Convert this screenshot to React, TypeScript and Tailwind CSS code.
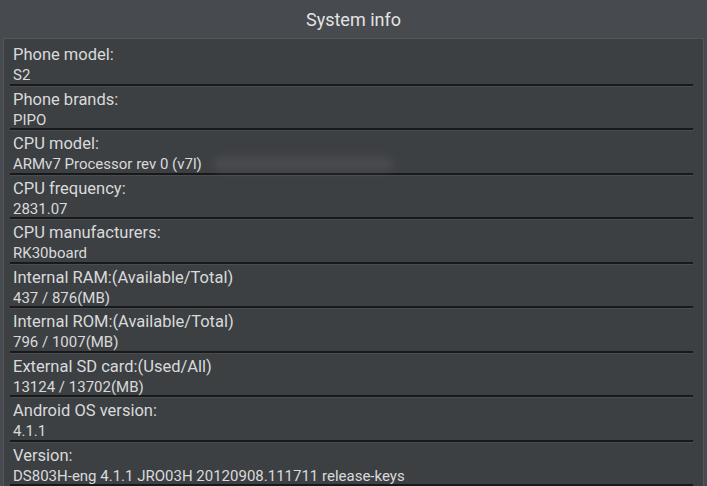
const rows: [string, string][] = [
  ["Phone model:", "S2"],
  ["Phone brands:", "PIPO"],
  ["CPU model:", "ARMv7 Processor rev 0 (v7l)"],
  ["CPU frequency:", "2831.07"],
  ["CPU manufacturers:", "RK30board"],
  ["Internal RAM:(Available/Total)", "437 / 876(MB)"],
  ["Internal ROM:(Available/Total)", "796 / 1007(MB)"],
  ["External SD card:(Used/All)", "13124 / 13702(MB)"],
  ["Android OS version:", "4.1.1"],
  ["Version:", "DS803H-eng 4.1.1 JRO03H 20120908.111711 release-keys"],
];

export default function App() {
  return (
    <div className="w-[707px] h-[486px] overflow-hidden bg-[#474a4e] font-['Roboto',sans-serif] text-[#d9dadb] flex flex-col">
      <div className="h-[38px] shrink-0 flex items-center justify-center">
        <span className="text-[18px] text-[#e2e3e4]">System info</span>
      </div>
      <div className="ml-[3px] mr-[3px] flex-1 bg-[#3d4043] border-l border-t border-r border-[#53565a] pt-[2px] pl-[6px] pr-[10px]">
        {rows.map(([label, value]) => (
          <div
            key={label}
            className="h-[44.5px] flex flex-col pt-[4px] pl-[3px] border-b-2 border-[#17191b] shadow-[0_1px_0_#4a4d50]"
          >
            <div className="text-[16.5px] leading-[20px]">{label}</div>
            <div className="text-[15px] leading-[20px] relative">
              {value}
              {label === "CPU model:" && (
                <span className="absolute left-[200px] top-[3px] w-[180px] h-[14px] rounded-full bg-[#57545b]/50 blur-[4px]" />
              )}
            </div>
          </div>
        ))}
      </div>
    </div>
  );
}
